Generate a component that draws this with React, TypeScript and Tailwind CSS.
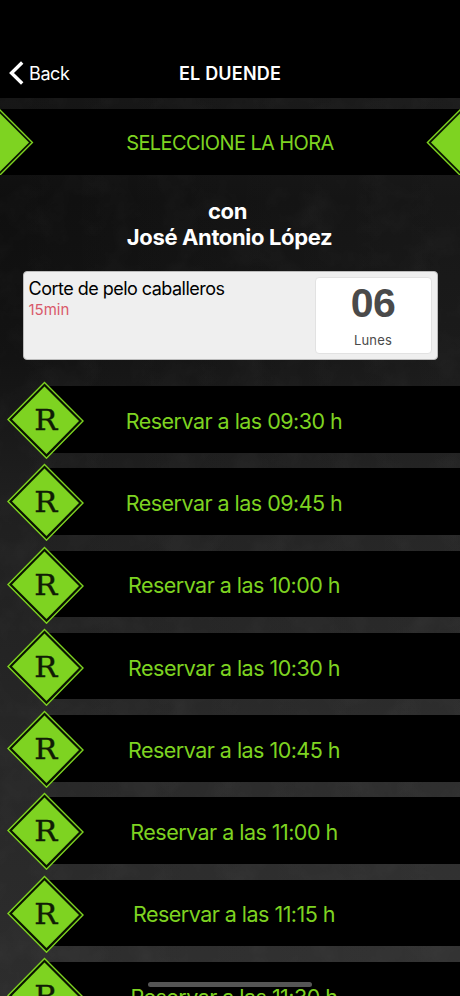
import React from "react"

type SlotProps = {
    time: string
}

const slots = ["09:30", "09:45", "10:00", "10:30", "10:45", "11:00", "11:15", "11:30"]

const Chalkboard = () => (
    <svg className="absolute inset-0 h-full w-full" preserveAspectRatio="none" viewBox="0 0 460 996">
        <defs>
            <linearGradient id="board" x1="0" y1="0" x2="0" y2="1">
                <stop offset="0.1" stopColor="#151515" />
                <stop offset="0.2" stopColor="#0f0f0f" />
                <stop offset="0.36" stopColor="#131313" />
                <stop offset="0.5" stopColor="#1f1f1f" />
                <stop offset="0.75" stopColor="#272727" />
                <stop offset="1" stopColor="#2d2d2d" />
            </linearGradient>
            <linearGradient id="light" x1="0" y1="0" x2="1" y2="0">
                <stop offset="0" stopColor="#fff" stopOpacity="0" />
                <stop offset="1" stopColor="#fff" stopOpacity="0.035" />
            </linearGradient>
            <filter id="dust" x="0" y="0" width="100%" height="100%">
                <feTurbulence type="fractalNoise" baseFrequency="0.03" numOctaves="4" seed="8" />
                <feColorMatrix values="0 0 0 0 1  0 0 0 0 1  0 0 0 0 1  0.4 0 0 0 -0.16" />
            </filter>
        </defs>
        <rect width="460" height="996" fill="url(#board)" />
        <rect width="460" height="996" fill="url(#light)" />
        <rect width="460" height="996" filter="url(#dust)" opacity="0.13" />
    </svg>
)

const Badge = () => (
    <svg className="absolute -left-[39px] -top-[5px] h-[78px] w-[78px]" viewBox="0 0 78 78">
        <path d="M37.5 1.5 L76 40 L39.5 77.2 L1 38.5 Z" fill="#0a1400" stroke="#7ed321" strokeWidth="1.4" />
        <path d="M37.5 5.6 L72 40 L39.5 73 L5 38.5 Z" fill="#7ed321" />
        <text
            x="38.4"
            y="49.3"
            textAnchor="middle"
            fontSize="27"
            textLength="22.5"
            lengthAdjust="spacingAndGlyphs"
            fontFamily="'DejaVu Serif', serif"
            fill="#101c05"
            stroke="#101c05"
            strokeWidth="0.35"
        >
            R
        </text>
    </svg>
)

const Slot = ({ time }: SlotProps) => (
    <button className="relative ml-[46px] flex h-[66.6px] shrink-0 items-center justify-center bg-black pr-[38px] pt-[3px] text-[21.5px] tracking-[-0.53px] text-[#7ed321]">
        <Badge />
        <span className="whitespace-nowrap">Reservar a las {time} h</span>
    </button>
)

const App = () => {
    return (
        <div className="relative h-[996px] w-[460px] overflow-hidden bg-black font-['Inter',sans-serif]">
            <Chalkboard />
            <div className="relative flex h-full flex-col">
                <header className="grid h-[98px] shrink-0 grid-cols-3 items-end bg-black pb-[10px] text-white">
                    <button className="flex items-center gap-[5px] pl-[9px] text-lg tracking-[-0.4px]">
                        <svg className="-mt-[2px] h-6 w-[15px]" viewBox="0 0 15 24" fill="none" stroke="currentColor" strokeWidth="3.4">
                            <path d="M13.2 1.5 L2.5 12 L13.2 22.5" />
                        </svg>
                        Back
                    </button>
                    <h1 className="text-center text-lg font-semibold tracking-[0.2px]">EL DUENDE</h1>
                </header>

                <div className="mt-[11px] flex h-[66px] shrink-0 items-center justify-between bg-black text-[#7ed321]">
                    <svg className="h-[66px] w-[34px]" viewBox="0 0 34 66">
                        <path d="M-1 0 L32.4 33.4 L-1 67" fill="#0a1400" stroke="#7ed321" strokeWidth="1.4" />
                        <path d="M0 4.5 L29 33.4 L0 62.5 Z" fill="#7ed321" />
                    </svg>
                    <h2 className="pt-[2px] text-xl tracking-[-0.6px]">SELECCIONE LA HORA</h2>
                    <svg className="h-[66px] w-[34px]" viewBox="0 0 34 66">
                        <path d="M35 0 L1.4 33.4 L35 67" fill="#0a1400" stroke="#7ed321" strokeWidth="1.4" />
                        <path d="M34 4.5 L5 33.4 L34 62.5 Z" fill="#7ed321" />
                    </svg>
                </div>

                <div className="mt-6 shrink-0 pr-px text-center text-[22px] font-bold leading-[25.5px] tracking-[-0.36px] text-white">
                    <p className="pr-1">con</p>
                    <p>José Antonio López</p>
                </div>

                <div className="mx-[22.5px] mt-[21px] flex h-[89px] shrink-0 justify-between rounded border border-[#bbb] bg-[#efefef] p-[5px]">
                    <div>
                        <p className="pt-px text-lg leading-[22px] tracking-[-0.52px] text-black">Corte de pelo caballeros</p>
                        <p className="text-[15px] leading-5 text-[#d9596a]">15min</p>
                    </div>
                    <div className="flex w-[117px] flex-col items-center rounded border border-[#e2e2e2] bg-white text-[#4a4a4a]">
                        <span className="mt-[2px] font-['Liberation_Sans',sans-serif] text-[41px] font-bold leading-[46px] tracking-[-0.5px]">06</span>
                        <span className="mt-[4px] text-[13px] leading-5 tracking-[0.2px]">Lunes</span>
                    </div>
                </div>

                <div className="mt-[26.2px] flex flex-col gap-[15.65px]">
                    {slots.map((time) => (
                        <Slot key={time} time={time} />
                    ))}
                </div>
            </div>
            {/* home indicator */}
            <div className="absolute bottom-[9px] left-[148px] h-[5px] w-[164px] rounded-full bg-[#555]" />
        </div>
    )
}

export default App
